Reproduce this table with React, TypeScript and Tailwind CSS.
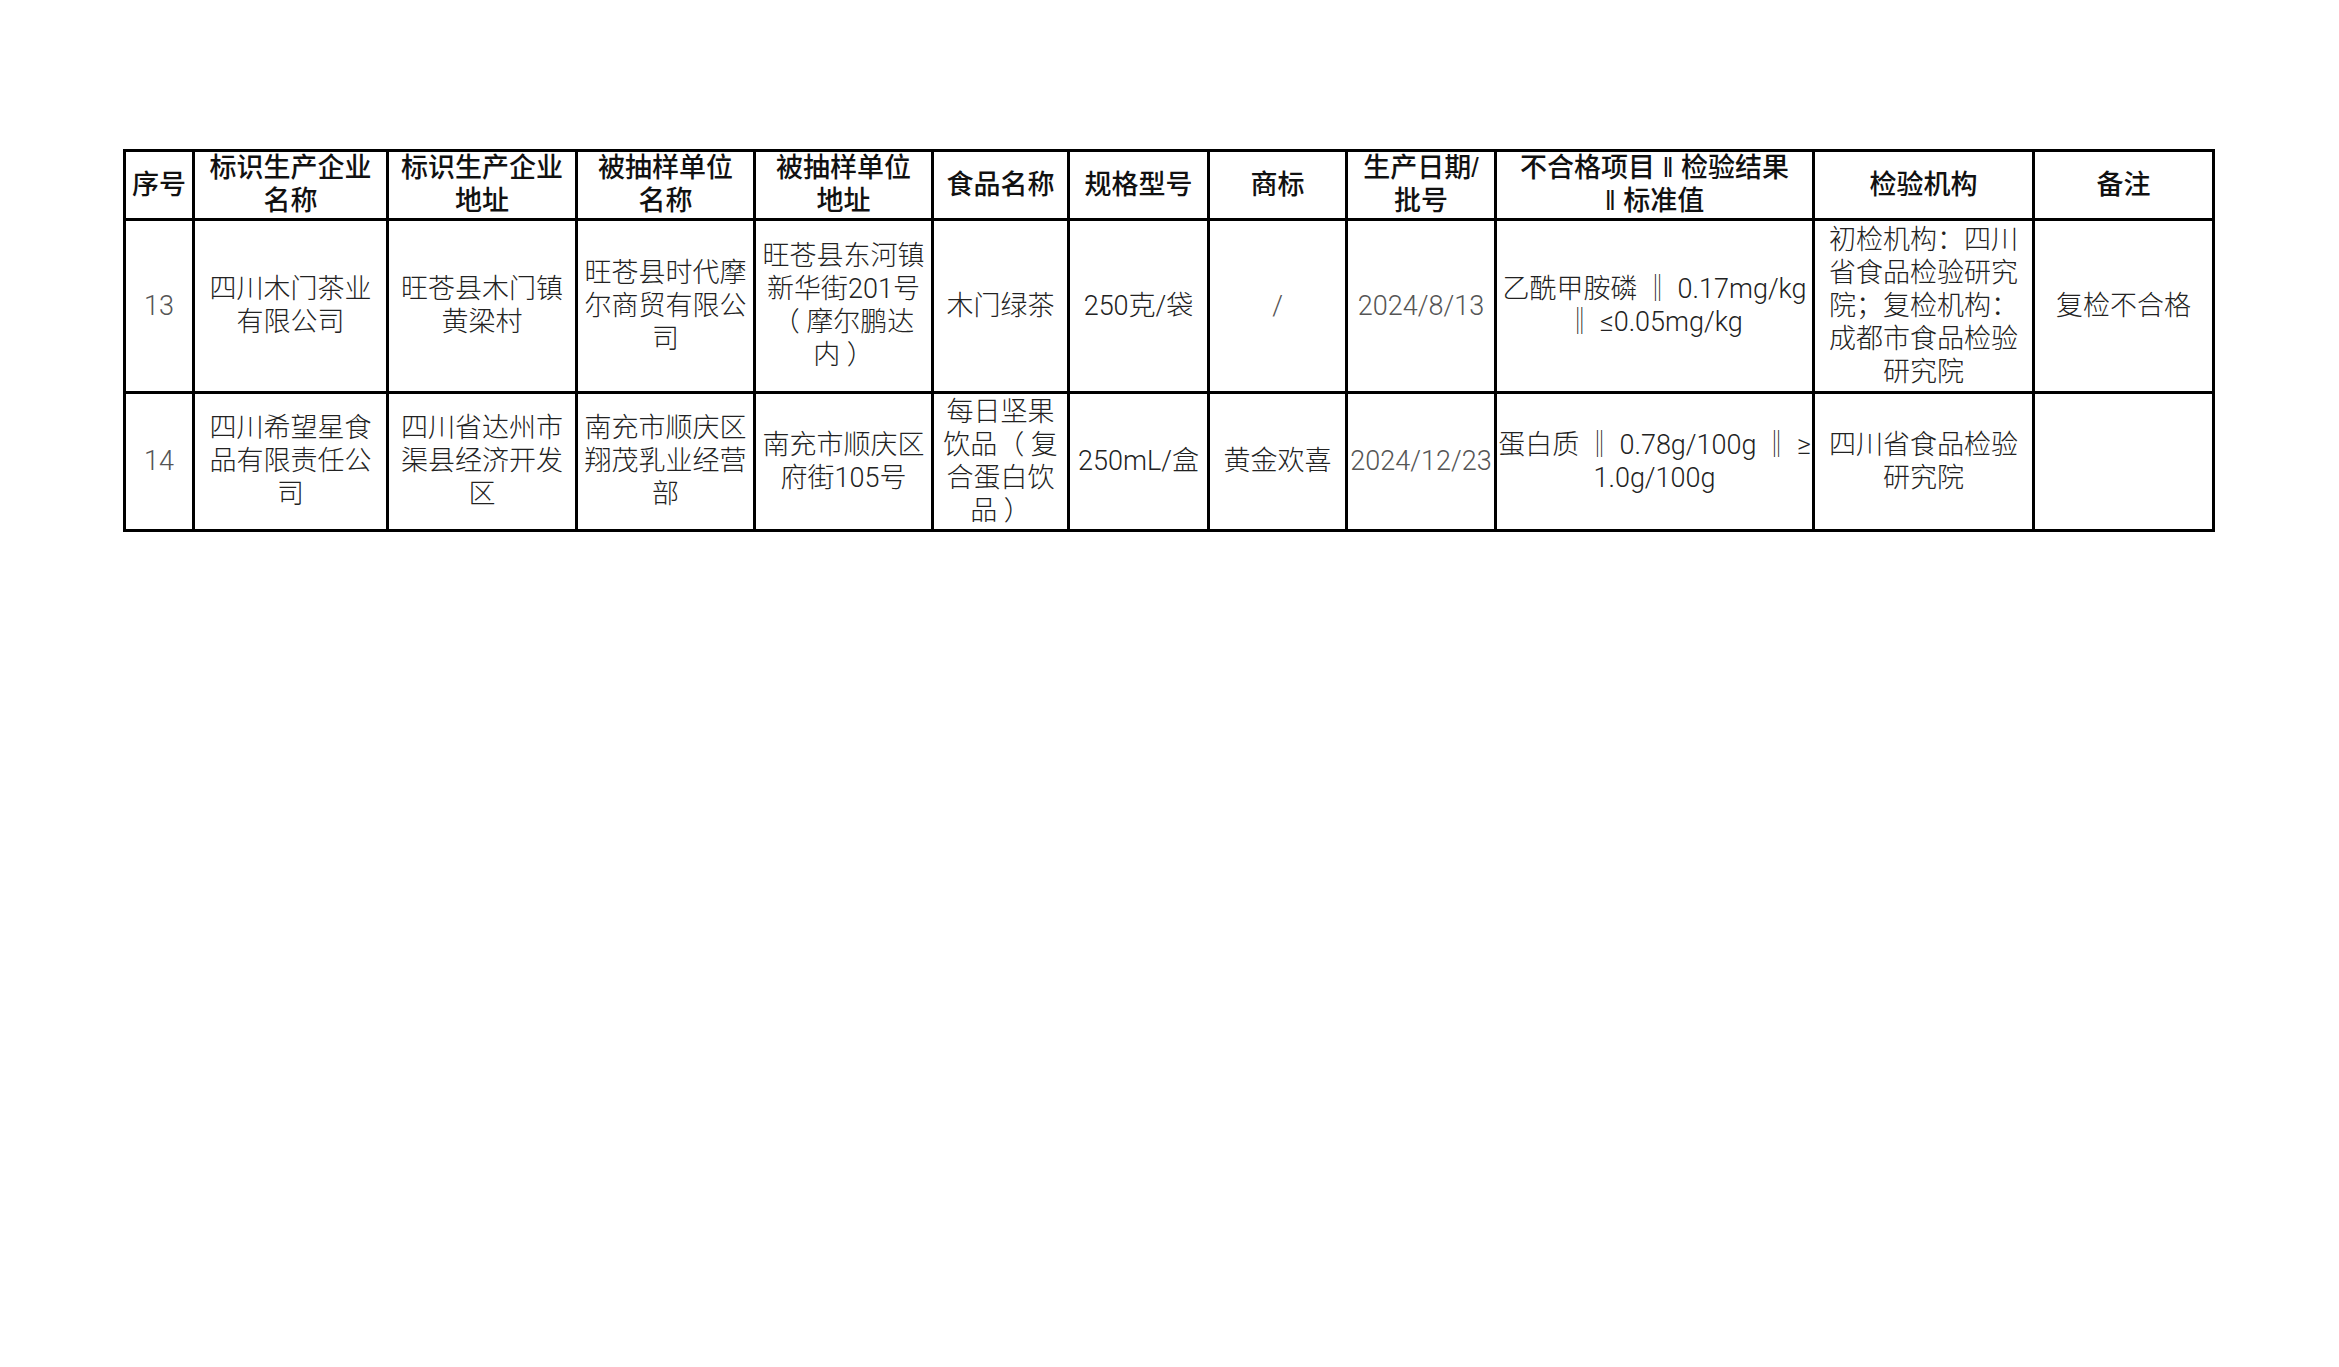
import React from "react";

type Cell = { lines: string[]; grey?: boolean };

const header: string[][] = [
  ["序号"],
  ["标识生产企业", "名称"],
  ["标识生产企业", "地址"],
  ["被抽样单位", "名称"],
  ["被抽样单位", "地址"],
  ["食品名称"],
  ["规格型号"],
  ["商标"],
  ["生产日期/", "批号"],
  ["不合格项目 ‖ 检验结果", "‖ 标准值"],
  ["检验机构"],
  ["备注"],
];

const rows: Cell[][] = [
  [
    { lines: ["13"], grey: true },
    { lines: ["四川木门茶业", "有限公司"] },
    { lines: ["旺苍县木门镇", "黄梁村"] },
    { lines: ["旺苍县时代摩", "尔商贸有限公", "司"] },
    { lines: ["旺苍县东河镇", "新华街201号", "（ 摩尔鹏达", "内 ）"] },
    { lines: ["木门绿茶"] },
    { lines: ["250克/袋"] },
    { lines: ["/"], grey: true },
    { lines: ["2024/8/13"], grey: true },
    { lines: ["乙酰甲胺磷 ‖ 0.17mg/kg", "‖ ≤0.05mg/kg"] },
    { lines: ["初检机构：四川", "省食品检验研究", "院；复检机构：", "成都市食品检验", "研究院"] },
    { lines: ["复检不合格"] },
  ],
  [
    { lines: ["14"], grey: true },
    { lines: ["四川希望星食", "品有限责任公", "司"] },
    { lines: ["四川省达州市", "渠县经济开发", "区"] },
    { lines: ["南充市顺庆区", "翔茂乳业经营", "部"] },
    { lines: ["南充市顺庆区", "府街105号"] },
    { lines: ["每日坚果", "饮品（ 复", "合蛋白饮", "品 ）"] },
    { lines: ["250mL/盒"] },
    { lines: ["黄金欢喜"] },
    { lines: ["2024/12/23"], grey: true },
    { lines: ["蛋白质 ‖ 0.78g/100g ‖ ≥", "1.0g/100g"] },
    { lines: ["四川省食品检验", "研究院"] },
    { lines: [] },
  ],
];

export default function App() {
  return (
    <div className="min-h-screen bg-white pt-[149px] pl-[123px]">
      <div className="inline-grid grid-cols-[66px_191px_186px_175px_175px_133px_137px_135px_146px_315px_217px_177px] grid-rows-[66px_170px_135px] gap-[3px] bg-black p-[3px]">
        {header.map((h, i) => (
          <div
            key={"h" + i}
            className="flex flex-col items-center justify-center bg-white text-center text-[27px] leading-[33px] text-[#111] font-medium"
            style={{ fontFamily: '"Liberation Sans", "Noto Sans CJK SC", sans-serif' }}
          >
            {h.map((l, j) => (
              <span key={j} className="whitespace-nowrap">
                {l}
              </span>
            ))}
          </div>
        ))}
        {rows.map((r, ri) =>
          r.map((c, ci) => (
            <div
              key={ri + "-" + ci}
              className={
                "flex flex-col items-center justify-center bg-white text-center text-[27px] leading-[33px] font-light " +
                (c.grey ? "text-[#555]" : "text-[#222]")
              }
              style={{ fontFamily: 'Roboto, "Noto Sans CJK SC", sans-serif' }}
            >
              {c.lines.map((l, j) => (
                <span key={j} className="whitespace-nowrap">
                  {l}
                </span>
              ))}
            </div>
          ))
        )}
      </div>
    </div>
  );
}
